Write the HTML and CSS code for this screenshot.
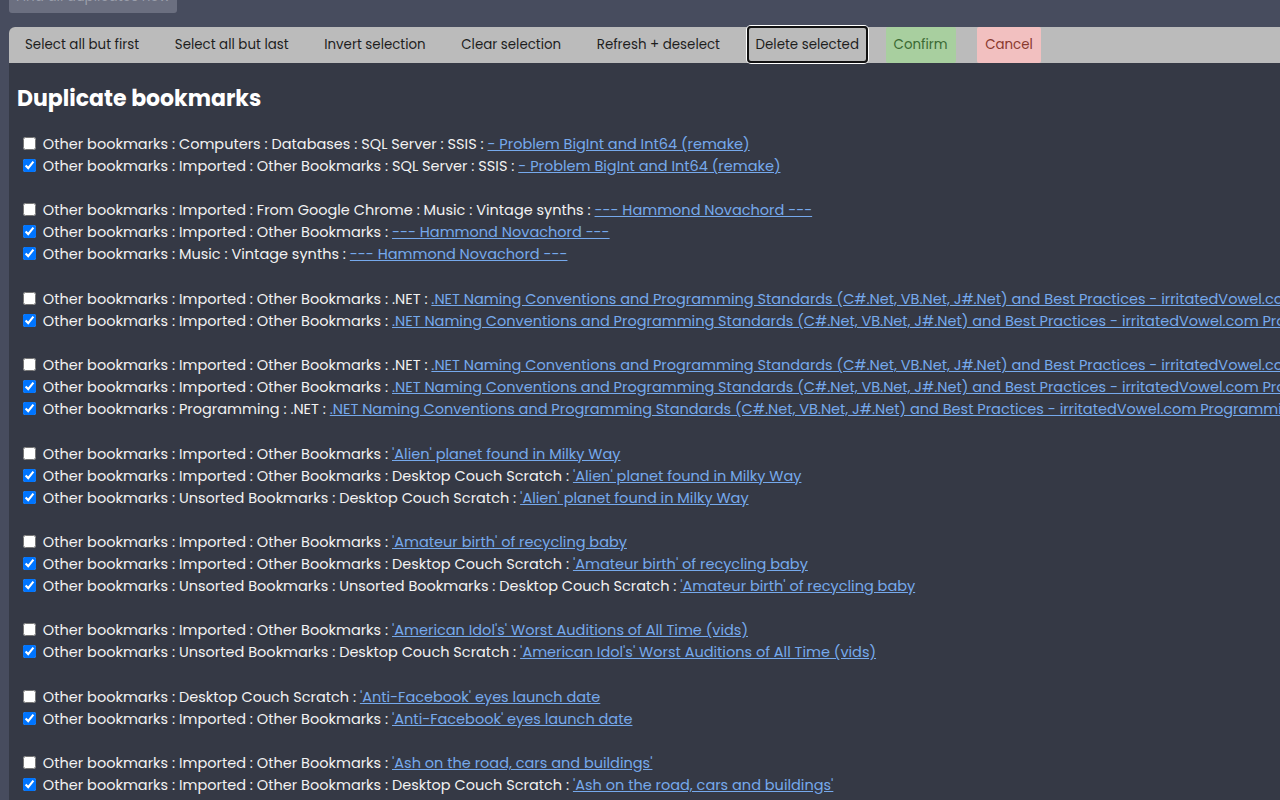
FILE: index.html
```html
<!DOCTYPE html>
<html lang="en">
<head>
  <meta charset="UTF-8" />
  <title>Duplicate bookmarks</title>
  <link rel="stylesheet" href="styles.css">
</head>
<body>
  <div class="page">
    <button class="find-btn">Find all duplicates now</button>

    <div class="main">
      <!-- action bar -->
      <div class="toolbar">
        <button class="tb-btn">Select all but first</button>
        <button class="tb-btn">Select all but last</button>
        <button class="tb-btn">Invert selection</button>
        <button class="tb-btn">Clear selection</button>
        <button class="tb-btn">Refresh + deselect</button>
        <button class="tb-btn delete">Delete selected</button>
        <button class="tb-btn confirm">Confirm</button>
        <button class="tb-btn cancel">Cancel</button>
      </div>

      <div class="content">
        <h2>Duplicate bookmarks</h2>

        <div class="group">
          <label class="row"><input type="checkbox"> Other bookmarks : Computers : Databases : SQL Server : SSIS : <a href="#">- Problem BigInt and Int64 (remake)</a></label>
          <label class="row"><input type="checkbox" checked> Other bookmarks : Imported : Other Bookmarks : SQL Server : SSIS : <a href="#">- Problem BigInt and Int64 (remake)</a></label>
        </div>

        <div class="group">
          <label class="row"><input type="checkbox"> Other bookmarks : Imported : From Google Chrome : Music : Vintage synths : <a href="#">--- Hammond Novachord ---</a></label>
          <label class="row"><input type="checkbox" checked> Other bookmarks : Imported : Other Bookmarks : <a href="#">--- Hammond Novachord ---</a></label>
          <label class="row"><input type="checkbox" checked> Other bookmarks : Music : Vintage synths : <a href="#">--- Hammond Novachord ---</a></label>
        </div>

        <div class="group">
          <label class="row"><input type="checkbox"> Other bookmarks : Imported : Other Bookmarks : .NET : <a href="#">.NET Naming Conventions and Programming Standards (C#.Net, VB.Net, J#.Net) and Best Practices - irritatedVowel.com Programming Conventions</a></label>
          <label class="row"><input type="checkbox" checked> Other bookmarks : Imported : Other Bookmarks : <a href="#">.NET Naming Conventions and Programming Standards (C#.Net, VB.Net, J#.Net) and Best Practices - irritatedVowel.com Programming Conventions</a></label>
        </div>

        <div class="group">
          <label class="row"><input type="checkbox"> Other bookmarks : Imported : Other Bookmarks : .NET : <a href="#">.NET Naming Conventions and Programming Standards (C#.Net, VB.Net, J#.Net) and Best Practices - irritatedVowel.com Programming Conventions</a></label>
          <label class="row"><input type="checkbox" checked> Other bookmarks : Imported : Other Bookmarks : <a href="#">.NET Naming Conventions and Programming Standards (C#.Net, VB.Net, J#.Net) and Best Practices - irritatedVowel.com Programming Conventions</a></label>
          <label class="row"><input type="checkbox" checked> Other bookmarks : Programming : .NET : <a href="#">.NET Naming Conventions and Programming Standards (C#.Net, VB.Net, J#.Net) and Best Practices - irritatedVowel.com Programming Conventions</a></label>
        </div>

        <div class="group">
          <label class="row"><input type="checkbox"> Other bookmarks : Imported : Other Bookmarks : <a href="#">'Alien' planet found in Milky Way</a></label>
          <label class="row"><input type="checkbox" checked> Other bookmarks : Imported : Other Bookmarks : Desktop Couch Scratch : <a href="#">'Alien' planet found in Milky Way</a></label>
          <label class="row"><input type="checkbox" checked> Other bookmarks : Unsorted Bookmarks : Desktop Couch Scratch : <a href="#">'Alien' planet found in Milky Way</a></label>
        </div>

        <div class="group">
          <label class="row"><input type="checkbox"> Other bookmarks : Imported : Other Bookmarks : <a href="#">'Amateur birth' of recycling baby</a></label>
          <label class="row"><input type="checkbox" checked> Other bookmarks : Imported : Other Bookmarks : Desktop Couch Scratch : <a href="#">'Amateur birth' of recycling baby</a></label>
          <label class="row"><input type="checkbox" checked> Other bookmarks : Unsorted Bookmarks : Unsorted Bookmarks : Desktop Couch Scratch : <a href="#">'Amateur birth' of recycling baby</a></label>
        </div>

        <div class="group">
          <label class="row"><input type="checkbox"> Other bookmarks : Imported : Other Bookmarks : <a href="#">'American Idol's' Worst Auditions of All Time (vids)</a></label>
          <label class="row"><input type="checkbox" checked> Other bookmarks : Unsorted Bookmarks : Desktop Couch Scratch : <a href="#">'American Idol's' Worst Auditions of All Time (vids)</a></label>
        </div>

        <div class="group">
          <label class="row"><input type="checkbox"> Other bookmarks : Desktop Couch Scratch : <a href="#">'Anti-Facebook' eyes launch date</a></label>
          <label class="row"><input type="checkbox" checked> Other bookmarks : Imported : Other Bookmarks : <a href="#">'Anti-Facebook' eyes launch date</a></label>
        </div>

        <div class="group">
          <label class="row"><input type="checkbox"> Other bookmarks : Imported : Other Bookmarks : <a href="#">'Ash on the road, cars and buildings'</a></label>
          <label class="row"><input type="checkbox" checked> Other bookmarks : Imported : Other Bookmarks : Desktop Couch Scratch : <a href="#">'Ash on the road, cars and buildings'</a></label>
          <label class="row"><input type="checkbox" checked> Other bookmarks : Unsorted Bookmarks : Desktop Couch Scratch : <a href="#">'Ash on the road, cars and buildings'</a></label>
        </div>
      </div>
    </div>
  </div>
</body>
</html>
```

FILE: styles.css
```css
body {
  margin: 0;
  padding: 0;
  background: #474c5e;
  overflow: hidden;
  font-family: "Poppins", "Open Sans", "Noto Sans", sans-serif;
  color: #f2f2f2;
}

.page {
  padding-left: 9px;
}

.find-btn {
  display: block;
  margin-top: -20px;
  width: 168px;
  height: 33px;
  border: none;
  border-radius: 0 0 3px 3px;
  background: #6b6f80;
  color: #9a9eab;
  font-family: inherit;
  font-size: 13.5px;
  white-space: nowrap;
  padding: 0;
}

.main {
  margin-top: 14px;
  background: #353945;
  border-top-left-radius: 6px;
  min-height: 900px;
}

.toolbar {
  display: flex;
  align-items: stretch;
  gap: 17.6px;
  height: 36px;
  padding-left: 7px;
  background: #bbbbbb;
  border-top-left-radius: 6px;
  white-space: nowrap;
}

.tb-btn {
  border: 2px solid transparent;
  padding: 0 7px;
  background: transparent;
  color: #1e1e1e;
  font-family: inherit;
  font-size: 13.4px;
  cursor: pointer;
}

.tb-btn.delete {
  border-color: #111;
  border-radius: 4px;
  margin-top: -1px;
  box-shadow: 0 0 0 1px #fff;
}

.tb-btn.confirm {
  background: #a8cf9f;
  color: #3b6a33;
  border-radius: 2px;
  padding: 0 6px;
}

.tb-btn.cancel {
  background: #f2c0c0;
  color: #8a3a2e;
  border-radius: 2px;
  padding: 0 6px;
  margin-left: 4px;
}

.content {
  padding: 0 8px;
}

.content h2 {
  margin: 23px 0 21px;
  font-size: 22px;
  font-weight: 700;
  color: #ffffff;
  line-height: 26px;
}

.group {
  margin-bottom: 22.4px;
}

.row {
  display: block;
  white-space: nowrap;
  line-height: 22px;
  font-size: 14.5px;
  padding-left: 2px;
}

.row input {
  margin: 0 3px 0 4px;
  vertical-align: -1px;
}

.row a {
  color: #76a9ec;
  text-decoration: underline;
}
```
